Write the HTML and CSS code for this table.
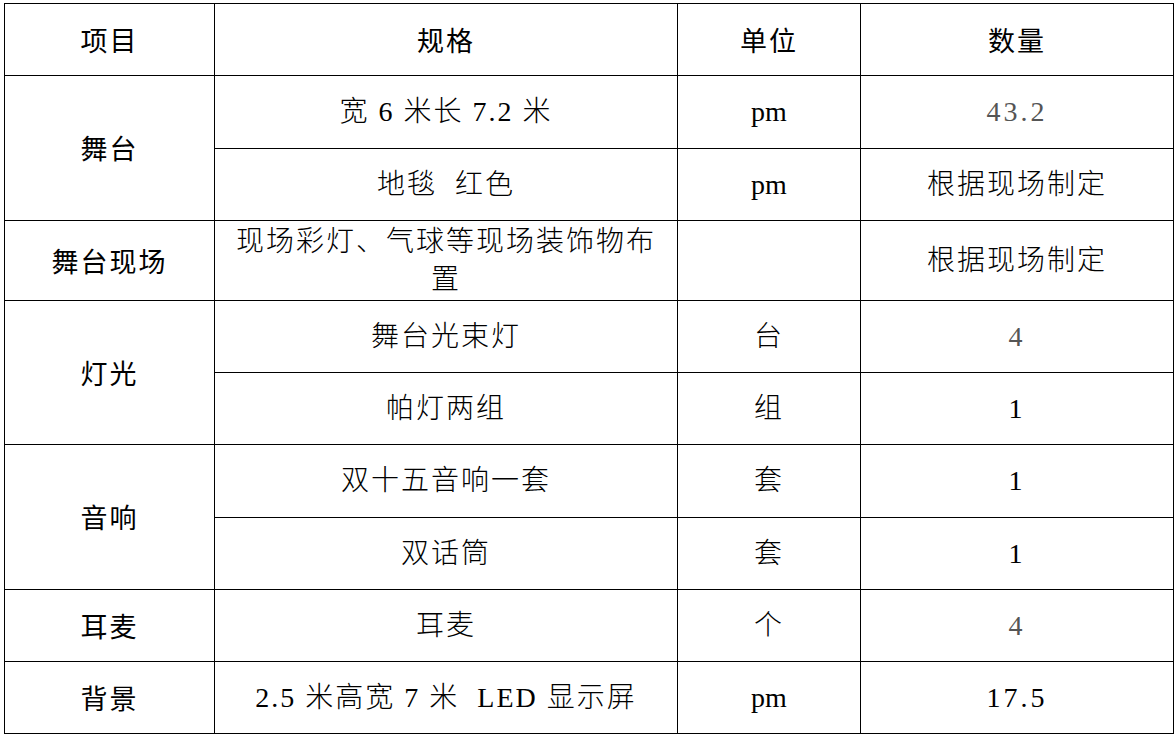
FILE: index.html
```html
<!DOCTYPE html>
<html lang="zh-CN">
<head>
<meta charset="utf-8">
<title>舞台物料清单</title>
<link rel="stylesheet" href="styles.css">
</head>
<body>
<div class="page">
<table class="list">
  <colgroup>
    <col class="c-item">
    <col class="c-spec">
    <col class="c-unit">
    <col class="c-qty">
  </colgroup>
  <thead>
    <tr class="h72">
      <th>项目</th>
      <th>规格</th>
      <th>单位</th>
      <th>数量</th>
    </tr>
  </thead>
  <tbody>
    <tr class="h73">
      <td class="item" rowspan="2">舞台</td>
      <td>宽 6 米长 7.2 米</td>
      <td class="lat unit">pm</td>
      <td class="lat thin">43.2</td>
    </tr>
    <tr class="h72">
      <td>地毯&nbsp;&nbsp;红色</td>
      <td class="lat unit">pm</td>
      <td>根据现场制定</td>
    </tr>
    <tr class="h80">
      <td class="item">舞台现场</td>
      <td class="wrap">现场彩灯、气球等现场装饰物布置</td>
      <td></td>
      <td>根据现场制定</td>
    </tr>
    <tr class="h72">
      <td class="item" rowspan="2">灯光</td>
      <td>舞台光束灯</td>
      <td>台</td>
      <td class="lat thin">4</td>
    </tr>
    <tr class="h72">
      <td>帕灯两组</td>
      <td>组</td>
      <td class="lat">1</td>
    </tr>
    <tr class="h73">
      <td class="item" rowspan="2">音响</td>
      <td>双十五音响一套</td>
      <td>套</td>
      <td class="lat">1</td>
    </tr>
    <tr class="h72">
      <td>双话筒</td>
      <td>套</td>
      <td class="lat">1</td>
    </tr>
    <tr class="h72">
      <td class="item">耳麦</td>
      <td>耳麦</td>
      <td>个</td>
      <td class="lat thin">4</td>
    </tr>
    <tr class="h72">
      <td class="item">背景</td>
      <td>2.5 米高宽 7 米&nbsp;&nbsp;LED 显示屏</td>
      <td class="lat unit">pm</td>
      <td class="lat">17.5</td>
    </tr>
  </tbody>
</table>
</div>
</body>
</html>
```

FILE: styles.css
```css
html, body {
  margin: 0;
  padding: 0;
  background: #ffffff;
}

.page {
  padding: 3px 0 0 4px;
}

.list {
  border-collapse: collapse;
  table-layout: fixed;
  width: 1169px;
  color: #000;
  font-family: "Liberation Serif", "Noto Sans CJK SC", serif;
  font-size: 28px;
  font-weight: 300;
  letter-spacing: 2px;
}

.c-item { width: 210px; }
.c-spec { width: 463px; }
.c-unit { width: 183px; }
.c-qty  { width: 313px; }

.list th,
.list td {
  border: 1px solid #000;
  text-align: center;
  vertical-align: middle;
  padding: 0 8px;
  line-height: 38px;
}

.list th,
.list td.item {
  font-family: "Noto Sans CJK SC", sans-serif;
  font-weight: 400;
  font-size: 27px;
  letter-spacing: 2px;
}

.h72 { height: 72px; }
.h73 { height: 73px; }
.h80 { height: 80px; }

.lat {
  font-family: "Liberation Serif", serif;
  font-weight: 400;
  letter-spacing: 3px;
}

.unit {
  letter-spacing: 0;
}

.thin {
  color: #555;
}
```
